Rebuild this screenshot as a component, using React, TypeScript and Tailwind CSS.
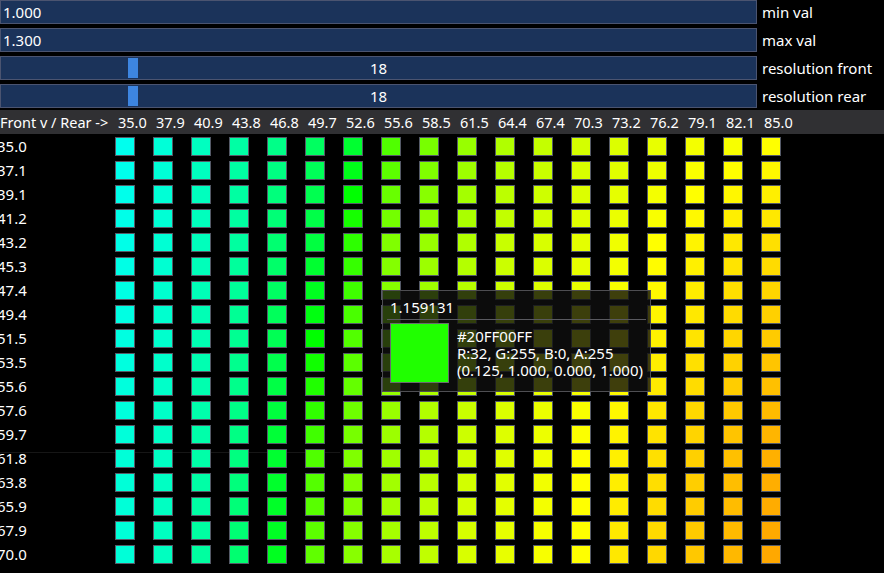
import React from "react";

const rearCols = ["35.0", "37.9", "40.9", "43.8", "46.8", "49.7", "52.6", "55.6", "58.5", "61.5", "64.4", "67.4", "70.3", "73.2", "76.2", "79.1", "82.1", "85.0"];
const frontRows = ["35.0", "37.1", "39.1", "41.2", "43.2", "45.3", "47.4", "49.4", "51.5", "53.5", "55.6", "57.6", "59.7", "61.8", "63.8", "65.9", "67.9", "70.0"];

// sampled positions on the cyan -> green -> yellow -> orange ramp (0..765)
const samples: [number, number[]][] = [
  [0, [17, 39, 63, 91, 119, 159, 207, 335, 375, 407, 431, 451, 467, 475, 487, 499, 503, 510]],
  [4, [23, 43, 67, 95, 143, 191, 300, 383, 407, 431, 455, 471, 483, 495, 510, 521, 533, 541]],
  [13, [39, 59, 87, 127, 207, 335, 383, 415, 439, 463, 479, 495, 510, 525, 541, 557, 573, 589]],
  [17, [39, 63, 95, 143, 223, 351, 391, 423, 447, 471, 487, 503, 510, 533, 549, 565, 581, 597]],
];

function rampAt(row: number, col: number) {
  for (let i = 0; i < samples.length - 1; i++) {
    const [r0, a] = samples[i];
    const [r1, b] = samples[i + 1];
    if (row >= r0 && row <= r1) {
      const t = (row - r0) / (r1 - r0);
      return a[col] + (b[col] - a[col]) * t;
    }
  }
  return samples[0][1][col];
}

function cellColor(row: number, col: number) {
  const s = Math.round(rampAt(row, col));
  if (s <= 255) return `rgb(0,255,${255 - s})`;
  if (s <= 510) return `rgb(${s - 255},255,0)`;
  return `rgb(255,${255 - (s - 510)},0)`;
}

function SliderRow({ value, label, grab }: { value: string; label: string; grab?: boolean }) {
  return (
    <div className="flex items-center h-[24px] gap-[5px]">
      <div className="relative w-[757px] h-full bg-[#1b335a] border border-[#4b5470] flex items-center">
        {grab ? (
          <>
            <div className="absolute left-[127px] top-[1px] w-[10px] h-[20px] bg-[#3d85e0]" />
            <span className="w-full text-center leading-[22px]">{value}</span>
          </>
        ) : (
          <span className="pl-[2px] leading-[22px]">{value}</span>
        )}
      </div>
      <span className="leading-[24px] whitespace-nowrap">{label}</span>
    </div>
  );
}

export default function App() {
  return (
    <div
      className="relative isolate w-[884px] h-[573px] bg-black text-white text-[15px] overflow-hidden"
      style={{ fontFamily: '"Noto Sans", "Open Sans", sans-serif' }}
    >
      <div className="absolute -z-10 left-0 top-[452px] w-[340px] h-px bg-[#161616]" />

      <div className="flex flex-col gap-[4px]">
        <SliderRow value="1.000" label="min val" />
        <SliderRow value="1.300" label="max val" />
        <SliderRow value="18" label="resolution front" grab />
        <SliderRow value="18" label="resolution rear" grab />
      </div>

      <div className="mt-[2px] h-[24px] bg-[#303033] flex items-center">
        <div className="w-[118px] whitespace-nowrap leading-[24px] text-[14.5px]">Front v / Rear -&gt;</div>
        {rearCols.map((c) => (
          <div key={c} className="w-[38px] leading-[24px] text-[14.5px]">{c}</div>
        ))}
      </div>

      {frontRows.map((f, r) => (
        <div key={f} className="h-[24px] flex">
          <div className="w-[118px] leading-[24px] -ml-[3px] pr-[3px]">{f}</div>
          {rearCols.map((c, ci) => (
            <div key={c} className="w-[38px] pt-[3px]">
              <div
                className="w-[20px] h-[19px] border border-[#555a68]"
                style={{ backgroundColor: cellColor(r, ci) }}
              />
            </div>
          ))}
        </div>
      ))}

      <div className="absolute left-[382px] top-[290px] w-[269px] h-[102px] bg-[rgba(15,15,15,0.8)] border border-[#4e4e52] px-[7px] pt-[8px]">
        <div className="leading-[17px]">1.159131</div>
        <div className="mt-[3px] -mx-[3px] h-px bg-[#5a5a60]" />
        <div className="mt-[3px] flex gap-[8px]">
          <div className="w-[60px] h-[60px] bg-[#20ff00] border border-[#6a6a70]" />
          <div className="pt-[5px] leading-[17px] whitespace-nowrap">
            <div>#20FF00FF</div>
            <div>R:32, G:255, B:0, A:255</div>
            <div>(0.125, 1.000, 0.000, 1.000)</div>
          </div>
        </div>
      </div>
    </div>
  );
}
